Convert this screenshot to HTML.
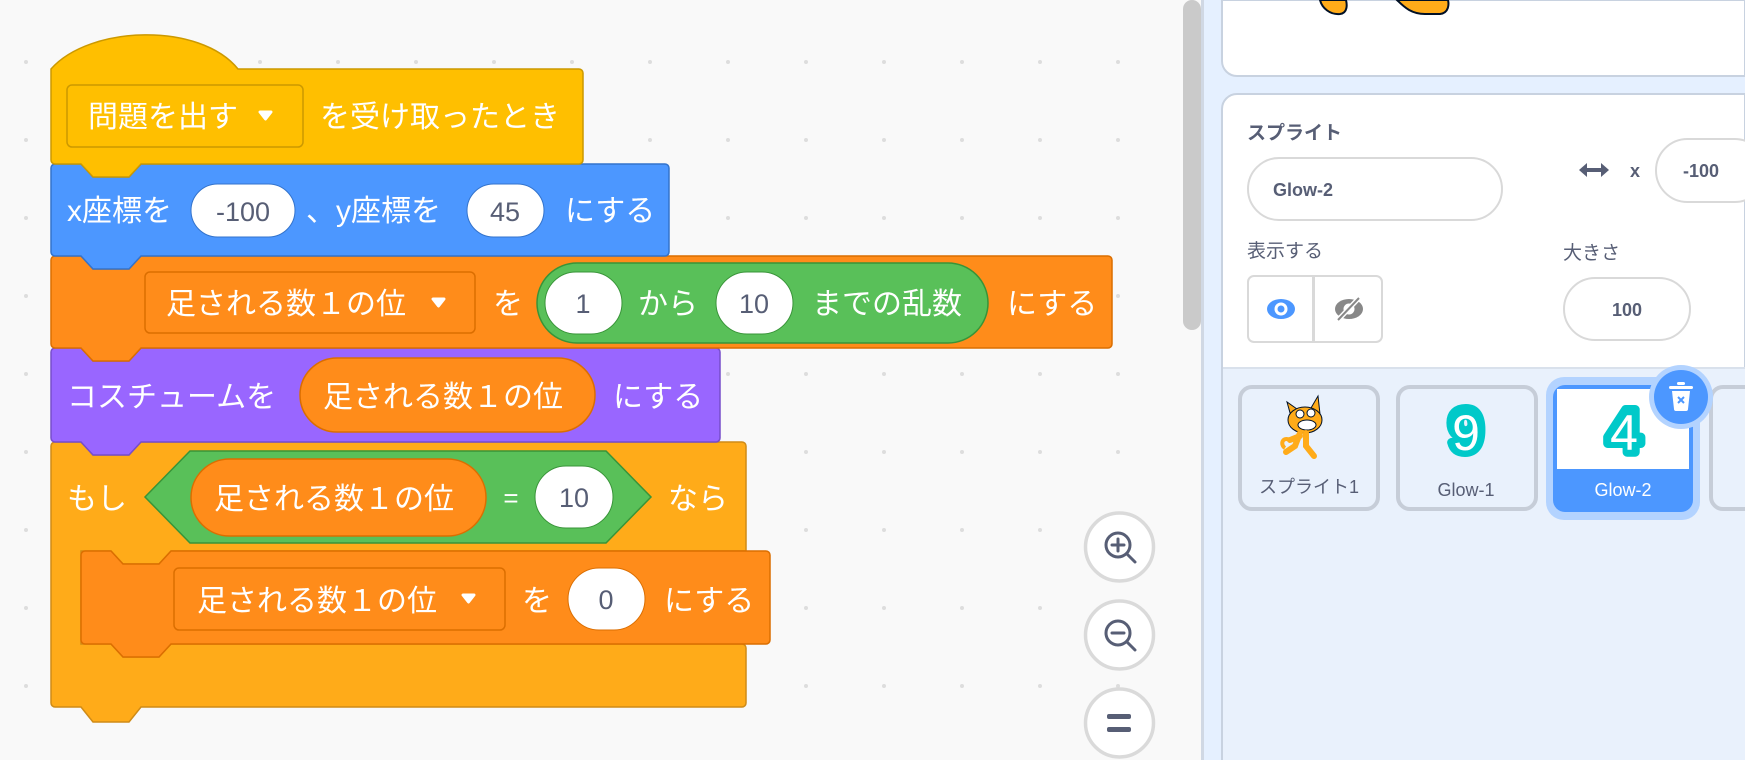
<!DOCTYPE html>
<html><head><meta charset="utf-8">
<style>
html,body{margin:0;padding:0;width:1745px;height:760px;overflow:hidden;background:#F9F9F9;}
svg{position:absolute;left:0;top:0;}
text{font-family:"Liberation Sans","Noto Sans CJK JP",sans-serif;}
</style></head><body>
<svg width="1745" height="760" viewBox="0 0 1745 760" xmlns="http://www.w3.org/2000/svg">
<defs>
<pattern id="dots" x="26" y="62" width="78" height="78" patternUnits="userSpaceOnUse">
<circle cx="0" cy="0" r="2" fill="#DDDDDD"/><circle cx="78" cy="0" r="2" fill="#DDDDDD"/><circle cx="0" cy="78" r="2" fill="#DDDDDD"/><circle cx="78" cy="78" r="2" fill="#DDDDDD"/>
</pattern>
</defs>
<rect x="0" y="0" width="1183" height="760" fill="url(#dots)"/>

<!-- if block (control) -->
<path d="M51,446 a4,4 0 0 1 4,-4 H81 L93,455 H129 L141,442 H742 a4,4 0 0 1 4,4 V551 H171 L159,564 H123 L111,551 H81 V644 H111 L123,657 H159 L171,644 H742 a4,4 0 0 1 4,4 V703 a4,4 0 0 1 -4,4 H141 L129,722 H93 L81,707 H55 a4,4 0 0 1 -4,-4 Z" fill="#FFAB19" stroke="#CF8B17" stroke-width="1.5"/>
<!-- inner set block -->
<path d="M81,555 a4,4 0 0 1 4,-4 H111 L123,564 H159 L171,551 H766 a4,4 0 0 1 4,4 V640 a4,4 0 0 1 -4,4 H171 L159,657 H123 L111,644 H85 a4,4 0 0 1 -4,-4 Z" fill="#FF8C1A" stroke="#DB6E00" stroke-width="1.5"/>
<!-- purple -->
<path d="M51,352 a4,4 0 0 1 4,-4 H81 L93,361 H129 L141,348 H716 a4,4 0 0 1 4,4 V438 a4,4 0 0 1 -4,4 H141 L129,455 H93 L81,442 H55 a4,4 0 0 1 -4,-4 Z" fill="#9966FF" stroke="#774DCB" stroke-width="1.5"/>
<!-- orange set -->
<path d="M51,260 a4,4 0 0 1 4,-4 H81 L93,269 H129 L141,256 H1108 a4,4 0 0 1 4,4 V344 a4,4 0 0 1 -4,4 H141 L129,361 H93 L81,348 H55 a4,4 0 0 1 -4,-4 Z" fill="#FF8C1A" stroke="#DB6E00" stroke-width="1.5"/>
<!-- blue -->
<path d="M51,168 a4,4 0 0 1 4,-4 H81 L93,177 H129 L141,164 H665 a4,4 0 0 1 4,4 V252 a4,4 0 0 1 -4,4 H141 L129,269 H93 L81,256 H55 a4,4 0 0 1 -4,-4 Z" fill="#4C97FF" stroke="#3373CC" stroke-width="1.5"/>
<!-- hat -->
<path d="M51,69 C90,25 200,22 238,69 H579 a4,4 0 0 1 4,4 V160 a4,4 0 0 1 -4,4 H141 L129,177 H93 L81,164 H55 a4,4 0 0 1 -4,-4 Z" fill="#FFBF00" stroke="#CC9900" stroke-width="1.5"/>

<!-- hat content -->
<rect x="67" y="85" width="236" height="62" rx="5" fill="#FFBF00" stroke="#CC9900" stroke-width="1.5"/>
<text x="88" y="127" font-size="30" fill="#fff">問題を出す</text>
<path d="M260,112 l11,0 l-5.5,7 z" fill="#fff" stroke="#fff" stroke-width="3" stroke-linejoin="round"/>
<text x="320" y="127" font-size="30" fill="#fff">を受け取ったとき</text>

<!-- blue content -->
<text x="67" y="221" font-size="30" fill="#fff">x座標を</text>
<rect x="191" y="184" width="104" height="53" rx="26.5" fill="#fff" stroke="#3373CC" stroke-width="1"/>
<text x="243" y="221" font-size="27" fill="#575E75" text-anchor="middle">-100</text>
<text x="306" y="221" font-size="30" fill="#fff">、y座標を</text>
<rect x="467" y="184" width="77" height="53" rx="26.5" fill="#fff" stroke="#3373CC" stroke-width="1"/>
<text x="505" y="221" font-size="27" fill="#575E75" text-anchor="middle">45</text>
<text x="565" y="221" font-size="30" fill="#fff">にする</text>

<!-- set content -->
<rect x="145" y="272" width="330" height="61" rx="5" fill="#FF8C1A" stroke="#DB6E00" stroke-width="1.5"/>
<text x="166" y="314" font-size="30" fill="#fff">足される数１の位</text>
<path d="M433,299 l11,0 l-5.5,7 z" fill="#fff" stroke="#fff" stroke-width="3" stroke-linejoin="round"/>
<text x="493" y="314" font-size="30" fill="#fff">を</text>
<rect x="537" y="263" width="451" height="80" rx="40" fill="#59C059" stroke="#389438" stroke-width="1.5"/>
<rect x="545" y="272" width="77" height="62" rx="31" fill="#fff" stroke="#389438" stroke-width="1"/>
<text x="583" y="313" font-size="27" fill="#575E75" text-anchor="middle">1</text>
<text x="638" y="314" font-size="30" fill="#fff">から</text>
<rect x="716" y="272" width="77" height="62" rx="31" fill="#fff" stroke="#389438" stroke-width="1"/>
<text x="754" y="313" font-size="27" fill="#575E75" text-anchor="middle">10</text>
<text x="812" y="314" font-size="30" fill="#fff">までの乱数</text>
<text x="1007" y="314" font-size="30" fill="#fff">にする</text>

<!-- purple content -->
<text x="67" y="407" font-size="30" fill="#fff">コスチュームを</text>
<rect x="300" y="358" width="295" height="74" rx="37" fill="#FF8C1A" stroke="#DB6E00" stroke-width="1.5"/>
<text x="323" y="407" font-size="30" fill="#fff">足される数１の位</text>
<text x="613" y="407" font-size="30" fill="#fff">にする</text>

<!-- if content -->
<text x="67" y="509" font-size="30" fill="#fff">もし</text>
<path d="M145,497 L190,451 H606 L651,497 L606,543 H190 Z" fill="#59C059" stroke="#389438" stroke-width="1.5"/>
<rect x="191" y="459" width="295" height="77" rx="38.5" fill="#FF8C1A" stroke="#DB6E00" stroke-width="1.5"/>
<text x="214" y="509" font-size="30" fill="#fff">足される数１の位</text>
<text x="511" y="507" font-size="26" fill="#fff" text-anchor="middle">=</text>
<rect x="535" y="466" width="78" height="62" rx="31" fill="#fff" stroke="#389438" stroke-width="1"/>
<text x="574" y="507" font-size="27" fill="#575E75" text-anchor="middle">10</text>
<text x="668" y="509" font-size="30" fill="#fff">なら</text>

<!-- inner set content -->
<rect x="174" y="568" width="331" height="62" rx="5" fill="#FF8C1A" stroke="#DB6E00" stroke-width="1.5"/>
<text x="197" y="611" font-size="30" fill="#fff">足される数１の位</text>
<path d="M463,595 l11,0 l-5.5,7 z" fill="#fff" stroke="#fff" stroke-width="3" stroke-linejoin="round"/>
<text x="522" y="611" font-size="30" fill="#fff">を</text>
<rect x="568" y="568" width="77" height="62" rx="31" fill="#fff" stroke="#DB6E00" stroke-width="1"/>
<text x="606" y="609" font-size="27" fill="#575E75" text-anchor="middle">0</text>
<text x="664" y="611" font-size="30" fill="#fff">にする</text>

<!-- zoom buttons -->
<g fill="#fff" stroke="#DADADA" stroke-width="3.5">
<circle cx="1119.5" cy="547" r="34"/><circle cx="1119.5" cy="635" r="34"/><circle cx="1119.5" cy="723" r="34"/>
</g>
<g stroke="#575E75" stroke-width="3" fill="none" stroke-linecap="round">
<circle cx="1118" cy="545" r="12"/><path d="M1127,554 L1135,562 M1112,545 H1124 M1118,539 V551"/>
<circle cx="1118" cy="633" r="12"/><path d="M1127,642 L1135,650 M1112,633 H1124"/>
</g>
<rect x="1107" y="714" width="24" height="5" rx="2" fill="#575E75"/>
<rect x="1107" y="727" width="24" height="5" rx="2" fill="#575E75"/>

<!-- scrollbar -->
<rect x="1183" y="0" width="18" height="330" rx="9" fill="#CACACA"/>

<!-- right area -->
<rect x="1201" y="0" width="544" height="760" fill="#E5F0FF"/>
<rect x="1201" y="0" width="3" height="760" fill="#D0D8E4"/>
<path d="M1222,0 V61 a15,15 0 0 0 15,15 H1745 V0 Z" fill="#fff" stroke="#C8D2E0" stroke-width="2"/>
<path d="M1320,0 C1322,8 1330,15 1340,14 C1348,13 1347,4 1346,0 Z" fill="#FFAB19" stroke="#001026" stroke-width="2"/>
<path d="M1397,0 C1405,8 1412,14 1425,14 H1440 C1449,13 1449,4 1448,0 Z" fill="#FFAB19" stroke="#001026" stroke-width="2"/>

<path d="M1222,760 V109 a15,15 0 0 1 15,-15 H1745 V760 Z" fill="#fff" stroke="#C8D2E0" stroke-width="2"/>
<rect x="1223" y="368" width="522" height="392" fill="#E9F1FC"/>
<rect x="1223" y="367" width="522" height="2" fill="#D9E1EC"/>

<text x="1247" y="139" font-size="19" font-weight="bold" fill="#575E75">スプライト</text>
<rect x="1248" y="158" width="254" height="62" rx="31" fill="#fff" stroke="#D9D9D9" stroke-width="2"/>
<text x="1273" y="196" font-size="18" font-weight="bold" fill="#575E75">Glow-2</text>
<path d="M1585,170 H1603" stroke="#575E75" stroke-width="4"/>
<path d="M1579,170 l8,-7 v14 z M1609,170 l-8,-7 v14 z" fill="#575E75"/>
<text x="1630" y="177" font-size="18" font-weight="bold" fill="#575E75">x</text>
<rect x="1656" y="139" width="110" height="63" rx="31.5" fill="#fff" stroke="#D9D9D9" stroke-width="2"/>
<text x="1701" y="177" font-size="18" font-weight="bold" fill="#575E75" text-anchor="middle">-100</text>

<text x="1247" y="257" font-size="19" fill="#575E75">表示する</text>
<text x="1563" y="259" font-size="19" fill="#575E75">大きさ</text>
<rect x="1248" y="276" width="134" height="66" rx="6" fill="#fff" stroke="#D9D9D9" stroke-width="2"/>
<rect x="1312" y="276" width="3" height="66" fill="#D9D9D9"/>
<ellipse cx="1281" cy="309" rx="14" ry="10" fill="#4C97FF"/>
<circle cx="1281" cy="309" r="6.5" fill="#fff"/><circle cx="1281" cy="309" r="3.5" fill="#4C97FF"/>
<ellipse cx="1349" cy="309" rx="14" ry="10" fill="#888"/>
<circle cx="1349" cy="309" r="5.5" fill="#fff"/>
<path d="M1338,320 L1359,298" stroke="#fff" stroke-width="5"/><path d="M1338,320 L1359,298" stroke="#888" stroke-width="2"/>
<rect x="1564" y="278" width="126" height="62" rx="31" fill="#fff" stroke="#D9D9D9" stroke-width="2"/>
<text x="1627" y="316" font-size="18" font-weight="bold" fill="#575E75" text-anchor="middle">100</text>

<!-- sprite tiles -->
<rect x="1240" y="387" width="138" height="122" rx="12" fill="#E9F1FC" stroke="#C6CDD8" stroke-width="4"/>
<rect x="1398" y="387" width="138" height="122" rx="12" fill="#E9F1FC" stroke="#C6CDD8" stroke-width="4"/>
<rect x="1546" y="377" width="154" height="143" rx="18" fill="#B3D3FF"/>
<rect x="1553" y="385" width="140" height="127" rx="12" fill="#4C97FF"/>
<rect x="1557" y="389" width="132" height="80" fill="#fff"/>
<rect x="1711" y="387" width="60" height="122" rx="12" fill="#E9F1FC" stroke="#C6CDD8" stroke-width="4"/>
<text x="1309" y="493" font-size="18" fill="#575E75" text-anchor="middle">スプライト1</text>
<text x="1466" y="496" font-size="18" fill="#575E75" text-anchor="middle">Glow-1</text>
<text x="1623" y="496" font-size="18" fill="#fff" text-anchor="middle">Glow-2</text>
<!-- digits -->
<text x="1466" y="452" font-size="62" font-weight="bold" fill="#00C9C9" stroke="#00C9C9" stroke-width="9" stroke-linejoin="round" text-anchor="middle">9</text>
<text x="1466" y="450" font-size="50" fill="#fff" text-anchor="middle">9</text>
<text x="1624" y="452" font-size="62" font-weight="bold" fill="#00C9C9" stroke="#00C9C9" stroke-width="9" stroke-linejoin="round" text-anchor="middle">4</text>
<text x="1624" y="450" font-size="50" fill="#fff" text-anchor="middle">4</text>
<!-- cat -->
<g>
<path d="M1292,420 L1287,402 L1297,409 Z M1311,408 L1318,396 L1320,414 Z" fill="#FFAB19" stroke="#001026" stroke-width="1"/>
<ellipse cx="1305" cy="420" rx="17" ry="13" fill="#FFAB19" stroke="#001026" stroke-width="1"/>
<ellipse cx="1307" cy="425" rx="9" ry="5" fill="#fff" stroke="#001026" stroke-width="1"/>
<circle cx="1300" cy="414" r="4" fill="#fff" stroke="#001026" stroke-width="1"/><circle cx="1311" cy="413" r="4" fill="#fff" stroke="#001026" stroke-width="1"/>
<path d="M1300,433 L1295,446 L1286,452 M1306,433 L1306,446 L1314,456 M1300,436 L1290,440" stroke="#FFAB19" stroke-width="6" fill="none" stroke-linecap="round"/>
<path d="M1290,440 C1282,436 1280,445 1285,448" stroke="#FFAB19" stroke-width="4" fill="none"/>
</g>
<!-- trash -->
<circle cx="1681" cy="397" r="32" fill="#B3D3FF"/>
<circle cx="1681" cy="397" r="27" fill="#4C97FF"/>
<path d="M1672,391 H1690 L1688,409 a2,2 0 0 1 -2,2 H1676 a2,2 0 0 1 -2,-2 Z" fill="#fff"/>
<rect x="1669" y="386" width="24" height="3" rx="1.5" fill="#fff"/>
<rect x="1677" y="382" width="8" height="3" rx="1.5" fill="#fff"/>
<path d="M1678,397 L1684,403 M1684,397 L1678,403" stroke="#4C97FF" stroke-width="2"/>
</svg>
</body></html>
